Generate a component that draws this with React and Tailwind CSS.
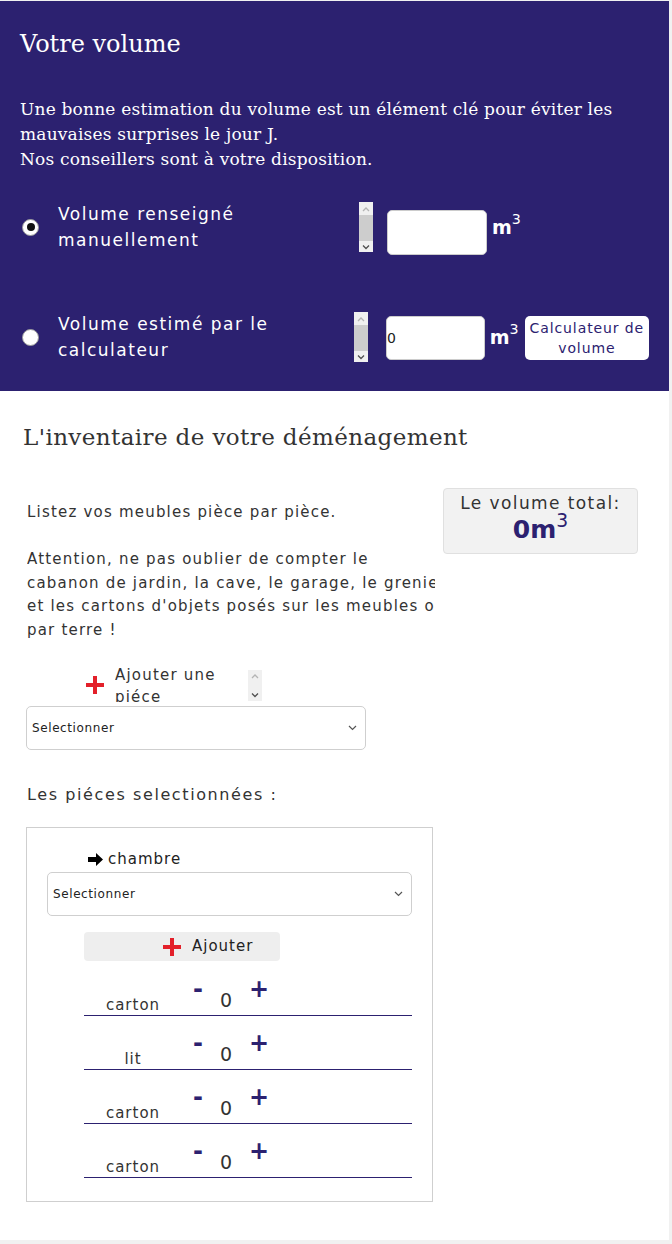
import React from 'react'

function Chevron({ up, light }) {
  return (
    <svg width="8" height="6" viewBox="0 0 8 6" className="shrink-0">
      <path
        d={up ? 'M1 5 L4 2 L7 5' : 'M1 1.5 L4 4.5 L7 1.5'}
        fill="none"
        stroke={light ? '#b4b4b4' : '#505050'}
        strokeWidth="1.3"
      />
    </svg>
  )
}

function FakeScroll({ size, thumb = true }) {
  return (
    <div className={`flex w-[14px] shrink-0 flex-col items-center bg-[#f0f0f0] ${size}`}>
      <div className="flex h-[13px] items-center"><Chevron up light /></div>
      <div className={`w-full flex-1 ${thumb ? 'bg-[#cdcdcd]' : ''}`} />
      <div className="flex h-[11px] items-center"><Chevron /></div>
    </div>
  )
}

function Radio({ checked }) {
  return (
    <div className="flex h-[17px] w-[17px] shrink-0 items-center justify-center rounded-full border border-[#9a9a9a] bg-white">
      {checked && <div className="h-[8px] w-[8px] rounded-full bg-[#111]" />}
    </div>
  )
}

function RedPlus() {
  return (
    <svg width="18" height="18" viewBox="0 0 18 18" className="shrink-0">
      <rect x="0" y="7" width="18" height="4" fill="#e3202a" />
      <rect x="7" y="0" width="4" height="18" fill="#e3202a" />
    </svg>
  )
}

function ArrowRight() {
  return (
    <svg width="15" height="13" viewBox="0 0 15 13" className="shrink-0">
      <path d="M0 4 H8 V0 L15 6.5 L8 13 V9 H0 Z" fill="#000" />
    </svg>
  )
}

function Cube({ className, value = '' }) {
  return (
    <span className={className}>
      {value}m<sup className="relative top-[-2px] align-super text-[0.75em] font-normal">3</sup>
    </span>
  )
}

function SelectBox({ width }) {
  return (
    <div className={`flex h-[44px] items-center justify-between rounded-[5px] border border-[#cfcfcf] bg-white pl-[5px] pr-[8px] ${width}`}>
      <span className="text-[12px] tracking-[0.6px] text-[#222]">Selectionner</span>
      <svg width="9" height="6" viewBox="0 0 9 6">
        <path d="M1 1 L4.5 4.5 L8 1" fill="none" stroke="#555" strokeWidth="1.2" />
      </svg>
    </div>
  )
}

function ItemRow({ label }) {
  return (
    <div className="flex h-[54px] items-start border-b-[1.5px] border-[#2c2170]">
      <span className="mt-[33px] w-[98px] text-center text-[15px] leading-[20px] tracking-[1px] text-[#333]">{label}</span>
      <span className="ml-[11px] mt-[15px] text-[24px] font-bold leading-[24px] text-[#2c2170]">-</span>
      <span className="ml-[17px] mt-[28px] text-[19px] leading-[20px] text-[#333]">0</span>
      <span className="ml-[17px] mt-[15px] text-[24px] font-bold leading-[24px] text-[#2c2170]">+</span>
    </div>
  )
}

export default function App() {
  return (
    <div className="min-h-[1244px] bg-[#f1f1f1] pr-[3px] pt-[1px] pb-[2px] font-['DejaVu_Sans',sans-serif]">
      {/* Votre volume */}
      <section className="bg-[#2c2170] px-5 pb-[28px] pt-[29px] text-white">
        <h2 className="font-['DejaVu_Serif',serif] text-[24px] leading-[28px]">Votre volume</h2>
        <p className="mt-[39px] font-['DejaVu_Serif',serif] text-[17px] leading-[25px] tracking-[0.2px]">
          Une bonne estimation du volume est un élément clé pour éviter les
          <br />
          mauvaises surprises le jour J.
          <br />
          Nos conseillers sont à votre disposition.
        </p>

        <div className="mt-[29px] flex h-[52px] items-center">
          <div className="ml-[2px]"><Radio checked /></div>
          <div className="ml-[19px] w-[301px] text-[17px] leading-[26px] tracking-[1.5px]">
            Volume renseigné
            <br />
            manuellement
          </div>
          <FakeScroll size="h-[50px]" />
          <div className="ml-[14px] mt-[10px] h-[45px] w-[100px] rounded-[5px] border border-[#ccc] bg-white" />
          <Cube className="ml-[5px] text-[19px] font-bold" />
        </div>

        <div className="mt-[58px] flex h-[52px] items-center">
          <div className="ml-[2px]"><Radio /></div>
          <div className="ml-[19px] w-[300px] text-[17px] leading-[26px] tracking-[1.5px]">
            Volume estimé par le
            <br />
            calculateur
          </div>
          <FakeScroll size="h-[50px]" />
          <div className="ml-[18px] mt-[2px] flex h-[44px] w-[100px] items-center rounded-[5px] border border-[#ccc] bg-white text-[14px] text-[#222]">
            0
          </div>
          <Cube className="ml-[5px] text-[19px] font-bold" />
          <button className="ml-[6px] mt-[2px] h-[44px] w-[126px] rounded-[5px] bg-white text-center text-[14px] leading-[20px] tracking-[0.9px] text-[#2c2170]">
            Calculateur de
            <br />
            volume
          </button>
        </div>
      </section>

      {/* Inventaire */}
      <section className="bg-white pb-[38px] pt-[31px]">
        <h2 className="ml-[23px] font-['DejaVu_Serif',serif] text-[23px] font-light leading-[30px] tracking-[0.4px] text-[#333]">
          L'inventaire de votre déménagement
        </h2>

        <div className="mt-[36px] flex items-start">
          <div className="ml-[27px] w-[408px] overflow-hidden whitespace-nowrap pt-[13px] text-[15px] leading-[23.5px] tracking-[1.2px] text-[#333]">
            <div>Listez vos meubles pièce par pièce.</div>
            <div>&nbsp;</div>
            <div>Attention, ne pas oublier de compter le</div>
            <div>cabanon de jardin, la cave, le garage, le grenier</div>
            <div>et les cartons d'objets posés sur les meubles ou</div>
            <div>par terre !</div>
          </div>
          <div className="ml-[8px] flex h-[66px] w-[195px] flex-col items-center rounded-[4px] border border-[#e0e0e0] bg-[#f2f2f2] pt-[2px]">
            <span className="text-[17px] leading-[24px] tracking-[1.4px] text-[#333]">Le volume total:</span>
            <Cube value="0" className="text-[25px] font-bold leading-[30px] text-[#2c2170]" />
          </div>
        </div>

        <div className="ml-[86px] mt-[25px] flex h-[36px] items-center">
          <RedPlus />
          <div className="ml-[11px] h-[34px] w-[133px] overflow-hidden text-[15px] leading-[22px] tracking-[1.2px] text-[#333]">
            <div className="-mt-[4px]">Ajouter une</div>
            <div>piéce</div>
          </div>
          <FakeScroll size="h-[31px]" thumb={false} />
        </div>

        <div className="ml-[26px] mt-[3px]">
          <SelectBox width="w-[340px]" />
        </div>

        <div className="ml-[27px] mt-[34px] text-[16px] leading-[22px] tracking-[1.6px] text-[#333]">
          Les piéces selectionnées :
        </div>

        <div className="ml-[26px] mt-[21px] w-[407px] border border-[#cfcfcf] pb-[23px] pt-[21px]">
          <div className="ml-[61px] flex items-center">
            <ArrowRight />
            <span className="ml-[5px] text-[15px] leading-[20px] tracking-[1px] text-[#222]">chambre</span>
          </div>
          <div className="ml-[20px] mt-[3px]">
            <SelectBox width="w-[365px]" />
          </div>
          <button className="ml-[57px] mt-[16px] flex h-[29px] w-[196px] items-center rounded-[4px] bg-[#eeeeee] pl-[79px]">
            <RedPlus />
            <span className="ml-[11px] text-[15px] tracking-[1px] text-[#222]">Ajouter</span>
          </button>
          <div className="ml-[57px] mt-[1px] w-[328px]">
            <ItemRow label="carton" />
            <ItemRow label="lit" />
            <ItemRow label="carton" />
            <ItemRow label="carton" />
          </div>
        </div>
      </section>
    </div>
  )
}
